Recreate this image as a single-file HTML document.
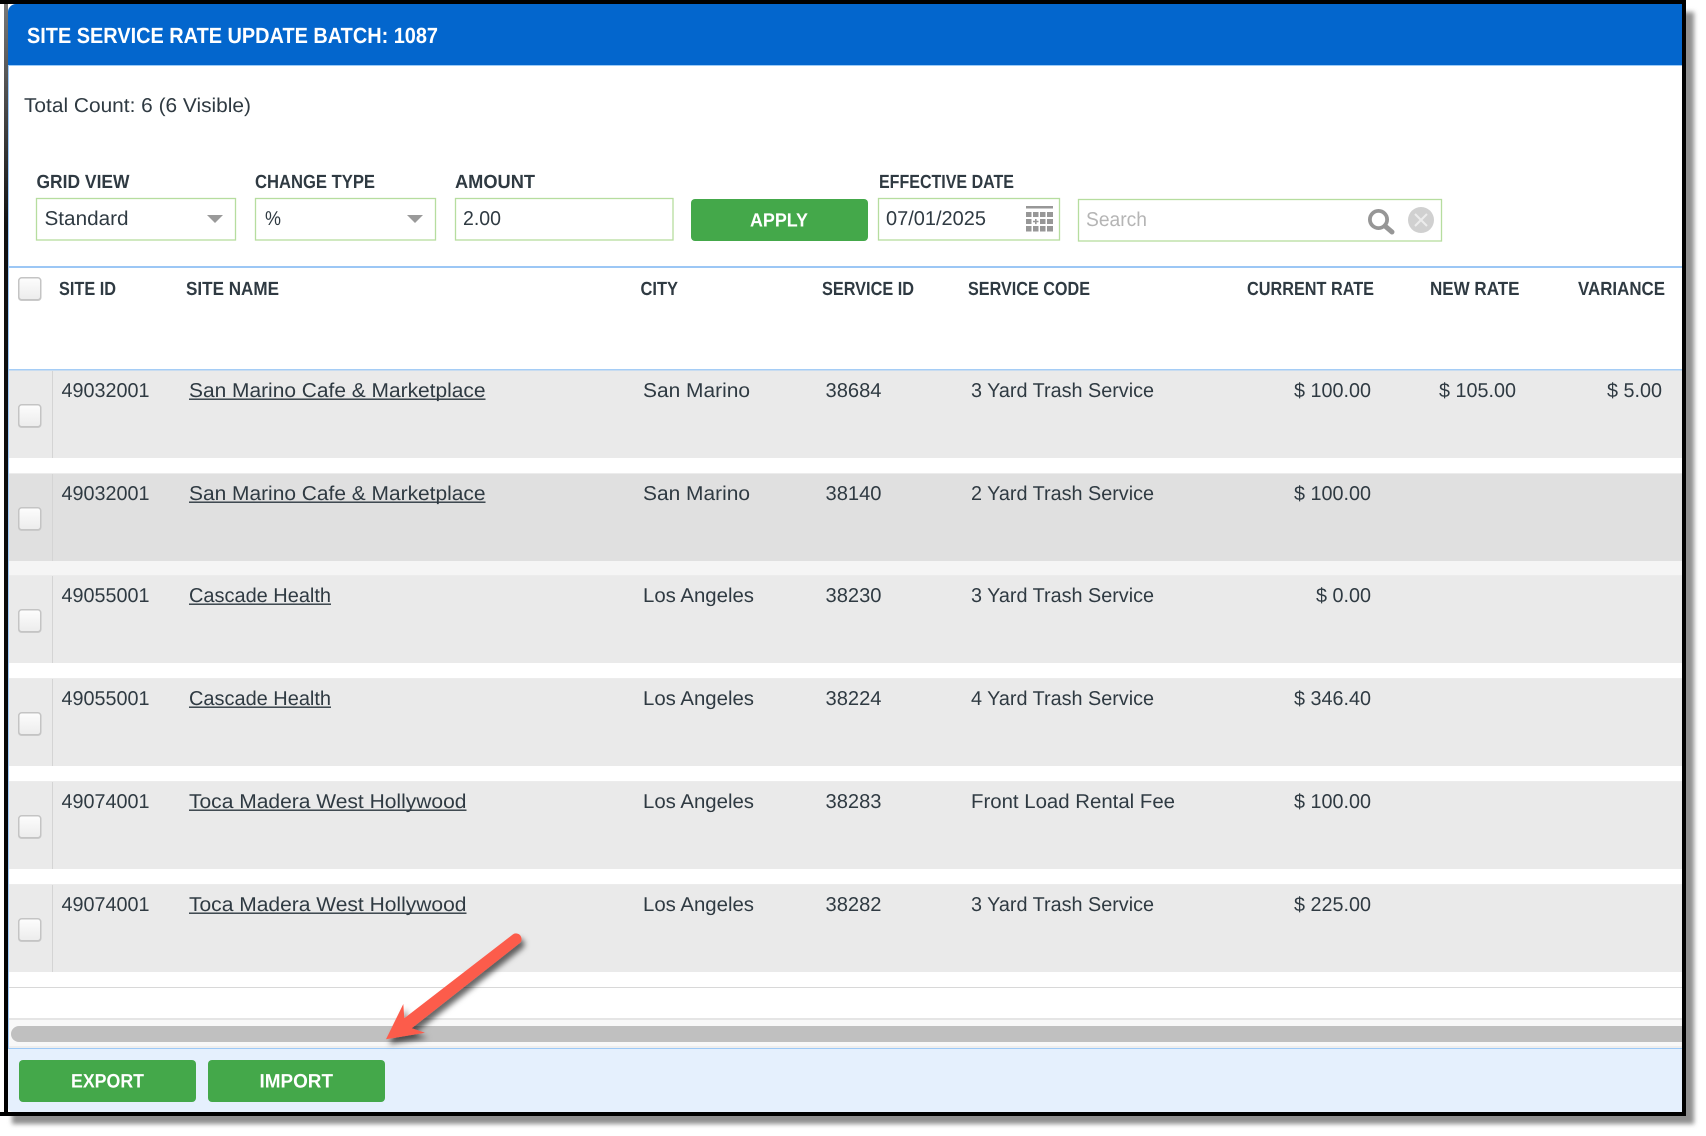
<!DOCTYPE html>
<html>
<head>
<meta charset="utf-8">
<title>Site Service Rate Update Batch</title>
<style>
html,body{margin:0;padding:0;background:#fff;width:1706px;height:1136px;overflow:hidden}
svg{display:block}
text{font-family:"Liberation Sans",sans-serif;fill:#2f3a42}
.t{font-size:20px}
.b{font-size:19px;font-weight:bold}
.w{fill:#fff;font-weight:bold}
</style>
</head>
<body>
<svg xmlns="http://www.w3.org/2000/svg" width="1706" height="1136" viewBox="0 0 1706 1136" text-rendering="geometricPrecision">
<defs>
<filter id="sh" x="-2%" y="-2%" width="104%" height="104%"><feGaussianBlur stdDeviation="2.5"/></filter>
<filter id="ar" x="-20%" y="-20%" width="150%" height="150%"><feDropShadow dx="3" dy="5" stdDeviation="3" flood-color="#000" flood-opacity=".6"/></filter>
<linearGradient id="cb" x1="0" y1="0" x2="0" y2="1"><stop offset="0" stop-color="#fdfdfd"/><stop offset="1" stop-color="#ececec"/></linearGradient>
<linearGradient id="lf" x1="0" y1="0" x2="0" y2="1"><stop offset="0" stop-color="#777"/><stop offset=".2" stop-color="#111"/><stop offset="1" stop-color="#000"/></linearGradient>
<g id="c"><rect x="0" y="1" width="23.5" height="23" rx="3.5" fill="#cfcfcf"/><rect x="0.75" y="0.75" width="22" height="22" rx="3" fill="url(#cb)" stroke="#c4c4c4" stroke-width="1.5"/></g>
</defs>

<!-- frame + shadow -->
<rect x="12" y="12" width="1682" height="1112" fill="#8f8f8f" filter="url(#sh)"/>
<rect x="0" y="0" width="1686" height="4" fill="#000"/>
<rect x="4" y="0" width="1682" height="1116" fill="#000"/>
<rect x="0" y="1112" width="1686" height="4" fill="#000"/>
<rect x="4" y="4" width="4" height="1108" fill="url(#lf)"/>
<rect x="8" y="4" width="1674" height="1108" fill="#fff"/>

<!-- header -->
<path d="M8 65V12a8 8 0 0 1 8-8H1682V65Z" fill="#0366cd"/>
<rect x="8" y="65" width="1674" height="1" fill="#9ccbf7"/>
<text x="27" y="43" class="w" font-size="22" textLength="411" lengthAdjust="spacingAndGlyphs">SITE SERVICE RATE UPDATE BATCH: 1087</text>
<text x="24" y="112" class="t" textLength="227" lengthAdjust="spacingAndGlyphs">Total Count: 6 (6 Visible)</text>

<!-- labels -->
<text x="36.5" y="188" class="b" textLength="93" lengthAdjust="spacingAndGlyphs">GRID VIEW</text>
<text x="255" y="188" class="b" textLength="120" lengthAdjust="spacingAndGlyphs">CHANGE TYPE</text>
<text x="455" y="188" class="b" textLength="80" lengthAdjust="spacingAndGlyphs">AMOUNT</text>
<text x="879" y="188" class="b" textLength="135" lengthAdjust="spacingAndGlyphs">EFFECTIVE DATE</text>

<!-- inputs -->
<g fill="#fff" stroke="#b6dd9f" stroke-width="1.3">
<rect x="36.5" y="198.5" width="199" height="41.5"/>
<rect x="255.5" y="198.5" width="180" height="41.5"/>
<rect x="455.5" y="198.5" width="217.5" height="41.5"/>
<rect x="878.5" y="198.5" width="181" height="41.5"/>
<rect x="1078.5" y="199.5" width="363" height="41.5"/>
</g>
<text x="44.5" y="225" class="t" textLength="84" lengthAdjust="spacingAndGlyphs">Standard</text>
<text x="265" y="225" class="t" textLength="16" lengthAdjust="spacingAndGlyphs">%</text>
<text x="463" y="225" class="t" textLength="38" lengthAdjust="spacingAndGlyphs">2.00</text>
<text x="886" y="225" class="t" textLength="100" lengthAdjust="spacingAndGlyphs">07/01/2025</text>
<text x="1086" y="226" class="t" style="fill:#b5b5b5" textLength="61" lengthAdjust="spacingAndGlyphs">Search</text>
<path d="M207 215H223L215 223Z M407 215H423L415 223Z" fill="#9a9a9a"/>

<!-- apply -->
<rect x="691" y="199" width="177" height="42" rx="4" fill="#44a84a"/>
<text x="750" y="226.5" class="w" font-size="19" textLength="58" lengthAdjust="spacingAndGlyphs">APPLY</text>

<!-- calendar icon -->
<g fill="#979797">
<rect x="1026" y="206" width="27" height="2.5"/>
<rect x="1026" y="212" width="5.5" height="5"/><rect x="1033" y="212" width="5.5" height="5"/><rect x="1040" y="212" width="5.5" height="5"/><rect x="1047" y="212" width="6" height="5"/>
<rect x="1026" y="219" width="5.5" height="5"/><path d="M1035 219h1.6v1.8h1.9v1.5h-1.9v1.8h-1.6v-1.8h-2v-1.5h2Z"/><rect x="1040" y="219" width="5.5" height="5"/><rect x="1047" y="219" width="6" height="5"/>
<rect x="1026" y="226" width="5.5" height="5.5"/><rect x="1033" y="226" width="5.5" height="5.5"/><rect x="1040" y="226" width="5.5" height="5.5"/><rect x="1047" y="226" width="6" height="5.5"/>
</g>

<!-- search icons -->
<circle cx="1378.5" cy="219.5" r="8.6" fill="none" stroke="#969696" stroke-width="3.8"/>
<path d="M1385 226L1392 232" stroke="#969696" stroke-width="5" stroke-linecap="round"/>
<circle cx="1421" cy="220" r="13" fill="#d0d0d0"/>
<path d="M1415 214L1427 226M1427 214L1415 226" stroke="#ececec" stroke-width="2"/>

<!-- table header -->
<rect x="8" y="266" width="1674" height="2" fill="#9cc7f5"/>
<use href="#c" x="18" y="277"/>
<text x="59" y="295" class="b" textLength="57" lengthAdjust="spacingAndGlyphs">SITE ID</text>
<text x="186" y="295" class="b" textLength="93" lengthAdjust="spacingAndGlyphs">SITE NAME</text>
<text x="640.5" y="295" class="b" textLength="37.5" lengthAdjust="spacingAndGlyphs">CITY</text>
<text x="822" y="295" class="b" textLength="92" lengthAdjust="spacingAndGlyphs">SERVICE ID</text>
<text x="968" y="295" class="b" textLength="122" lengthAdjust="spacingAndGlyphs">SERVICE CODE</text>
<text x="1247" y="295" class="b" textLength="127" lengthAdjust="spacingAndGlyphs">CURRENT RATE</text>
<text x="1430" y="295" class="b" textLength="89.5" lengthAdjust="spacingAndGlyphs">NEW RATE</text>
<text x="1578" y="295" class="b" textLength="87" lengthAdjust="spacingAndGlyphs">VARIANCE</text>

<!-- row backgrounds -->
<rect x="9" y="370" width="1673" height="88" fill="#eaeaea"/>
<rect x="9" y="473" width="1673" height="88" fill="#e0e0e0"/>
<rect x="9" y="561" width="1673" height="14" fill="#f5f5f5"/>
<rect x="9" y="575" width="1673" height="88" fill="#eaeaea"/>
<rect x="9" y="678" width="1673" height="88" fill="#eaeaea"/>
<rect x="9" y="781" width="1673" height="88" fill="#eaeaea"/>
<rect x="9" y="884" width="1673" height="88" fill="#eaeaea"/>
<rect x="8" y="369" width="1674" height="1.5" fill="#a5cdf6"/>
<g fill="#ececec"><rect x="9" y="473" width="1673" height="1"/><rect x="9" y="575" width="1673" height="1"/><rect x="9" y="678" width="1673" height="1"/><rect x="9" y="781" width="1673" height="1"/><rect x="9" y="884" width="1673" height="1"/></g>
<g fill="#d4d4d4"><rect x="52" y="371" width="1" height="87"/><rect x="52" y="474" width="1" height="87"/><rect x="52" y="576" width="1" height="87"/><rect x="52" y="679" width="1" height="87"/><rect x="52" y="782" width="1" height="87"/><rect x="52" y="885" width="1" height="87"/></g>
<use href="#c" x="18" y="404"/><use href="#c" x="18" y="507"/><use href="#c" x="18" y="609"/><use href="#c" x="18" y="712"/><use href="#c" x="18" y="815"/><use href="#c" x="18" y="918"/>

<!-- row 1 -->
<g class="t">
<text class="t" x="61.5" y="397" textLength="88" lengthAdjust="spacingAndGlyphs">49032001</text>
<text class="t" x="189" y="397" textLength="296.5" lengthAdjust="spacingAndGlyphs">San Marino Cafe &amp; Marketplace</text>
<rect x="189" y="398.5" width="296.5" height="1.4" fill="#2f3a42"/>
<text class="t" x="643" y="397" textLength="107" lengthAdjust="spacingAndGlyphs">San Marino</text>
<text class="t" x="825.5" y="397" textLength="56" lengthAdjust="spacingAndGlyphs">38684</text>
<text class="t" x="971" y="397" textLength="183" lengthAdjust="spacingAndGlyphs">3 Yard Trash Service</text>
<text class="t" x="1294" y="397" textLength="77" lengthAdjust="spacingAndGlyphs">$ 100.00</text>
<text class="t" x="1439" y="397" textLength="77" lengthAdjust="spacingAndGlyphs">$ 105.00</text>
<text class="t" x="1607" y="397" textLength="55" lengthAdjust="spacingAndGlyphs">$ 5.00</text>

<!-- row 2 -->
<text class="t" x="61.5" y="500" textLength="88" lengthAdjust="spacingAndGlyphs">49032001</text>
<text class="t" x="189" y="500" textLength="296.5" lengthAdjust="spacingAndGlyphs">San Marino Cafe &amp; Marketplace</text>
<rect x="189" y="501.5" width="296.5" height="1.4" fill="#2f3a42"/>
<text class="t" x="643" y="500" textLength="107" lengthAdjust="spacingAndGlyphs">San Marino</text>
<text class="t" x="825.5" y="500" textLength="56" lengthAdjust="spacingAndGlyphs">38140</text>
<text class="t" x="971" y="500" textLength="183" lengthAdjust="spacingAndGlyphs">2 Yard Trash Service</text>
<text class="t" x="1294" y="500" textLength="77" lengthAdjust="spacingAndGlyphs">$ 100.00</text>

<!-- row 3 -->
<text class="t" x="61.5" y="602" textLength="88" lengthAdjust="spacingAndGlyphs">49055001</text>
<text class="t" x="189" y="602" textLength="142" lengthAdjust="spacingAndGlyphs">Cascade Health</text>
<rect x="189" y="603.5" width="142" height="1.4" fill="#2f3a42"/>
<text class="t" x="643" y="602" textLength="111" lengthAdjust="spacingAndGlyphs">Los Angeles</text>
<text class="t" x="825.5" y="602" textLength="56" lengthAdjust="spacingAndGlyphs">38230</text>
<text class="t" x="971" y="602" textLength="183" lengthAdjust="spacingAndGlyphs">3 Yard Trash Service</text>
<text class="t" x="1316" y="602" textLength="55" lengthAdjust="spacingAndGlyphs">$ 0.00</text>

<!-- row 4 -->
<text class="t" x="61.5" y="705" textLength="88" lengthAdjust="spacingAndGlyphs">49055001</text>
<text class="t" x="189" y="705" textLength="142" lengthAdjust="spacingAndGlyphs">Cascade Health</text>
<rect x="189" y="706.5" width="142" height="1.4" fill="#2f3a42"/>
<text class="t" x="643" y="705" textLength="111" lengthAdjust="spacingAndGlyphs">Los Angeles</text>
<text class="t" x="825.5" y="705" textLength="56" lengthAdjust="spacingAndGlyphs">38224</text>
<text class="t" x="971" y="705" textLength="183" lengthAdjust="spacingAndGlyphs">4 Yard Trash Service</text>
<text class="t" x="1294" y="705" textLength="77" lengthAdjust="spacingAndGlyphs">$ 346.40</text>

<!-- row 5 -->
<text class="t" x="61.5" y="808" textLength="88" lengthAdjust="spacingAndGlyphs">49074001</text>
<text class="t" x="189" y="808" textLength="277.5" lengthAdjust="spacingAndGlyphs">Toca Madera West Hollywood</text>
<rect x="189" y="809.5" width="277.5" height="1.4" fill="#2f3a42"/>
<text class="t" x="643" y="808" textLength="111" lengthAdjust="spacingAndGlyphs">Los Angeles</text>
<text class="t" x="825.5" y="808" textLength="56" lengthAdjust="spacingAndGlyphs">38283</text>
<text class="t" x="971" y="808" textLength="204" lengthAdjust="spacingAndGlyphs">Front Load Rental Fee</text>
<text class="t" x="1294" y="808" textLength="77" lengthAdjust="spacingAndGlyphs">$ 100.00</text>

<!-- row 6 -->
<text class="t" x="61.5" y="911" textLength="88" lengthAdjust="spacingAndGlyphs">49074001</text>
<text class="t" x="189" y="911" textLength="277.5" lengthAdjust="spacingAndGlyphs">Toca Madera West Hollywood</text>
<rect x="189" y="912.5" width="277.5" height="1.4" fill="#2f3a42"/>
<text class="t" x="643" y="911" textLength="111" lengthAdjust="spacingAndGlyphs">Los Angeles</text>
<text class="t" x="825.5" y="911" textLength="56" lengthAdjust="spacingAndGlyphs">38282</text>
<text class="t" x="971" y="911" textLength="183" lengthAdjust="spacingAndGlyphs">3 Yard Trash Service</text>
<text class="t" x="1294" y="911" textLength="77" lengthAdjust="spacingAndGlyphs">$ 225.00</text>
</g>

<!-- bottom of grid -->
<rect x="9" y="987" width="1673" height="1" fill="#d8d8d8"/>
<rect x="9" y="1018" width="1673" height="2" fill="#e5e5e5"/>
<rect x="9" y="1020" width="1673" height="26" fill="#f8f8f8"/>
<path d="M19 1026H1682V1042H19a8 8 0 0 1 0-16Z" fill="#c0c0c0"/>
<rect x="9" y="1046" width="1673" height="2" fill="#eeeeee"/>
<rect x="8" y="66" width="1" height="982" fill="#9cc9f7"/>
<rect x="8" y="1048" width="1674" height="1" fill="#9cc9f7"/>

<!-- footer -->
<path d="M8 1049H1682V1112H13a5 5 0 0 1-5-5Z" fill="#e5f0fd"/>
<rect x="19" y="1060" width="177" height="42" rx="4" fill="#44a84a"/>
<rect x="208" y="1060" width="177" height="42" rx="4" fill="#44a84a"/>
<text x="71" y="1087.5" class="w" font-size="19.5" textLength="73" lengthAdjust="spacingAndGlyphs">EXPORT</text>
<text x="259.5" y="1087.5" class="w" font-size="19.5" textLength="73.5" lengthAdjust="spacingAndGlyphs">IMPORT</text>

<!-- arrow -->
<path d="M512.6 934.6L404.3 1018.3L403.3 1004L386 1039.3L425 1032.7L411.7 1028.3L519.4 943.4A5.5 5.5 0 0 0 512.6 934.6Z" fill="#fc5b4c" filter="url(#ar)"/>
</svg>
</body>
</html>
